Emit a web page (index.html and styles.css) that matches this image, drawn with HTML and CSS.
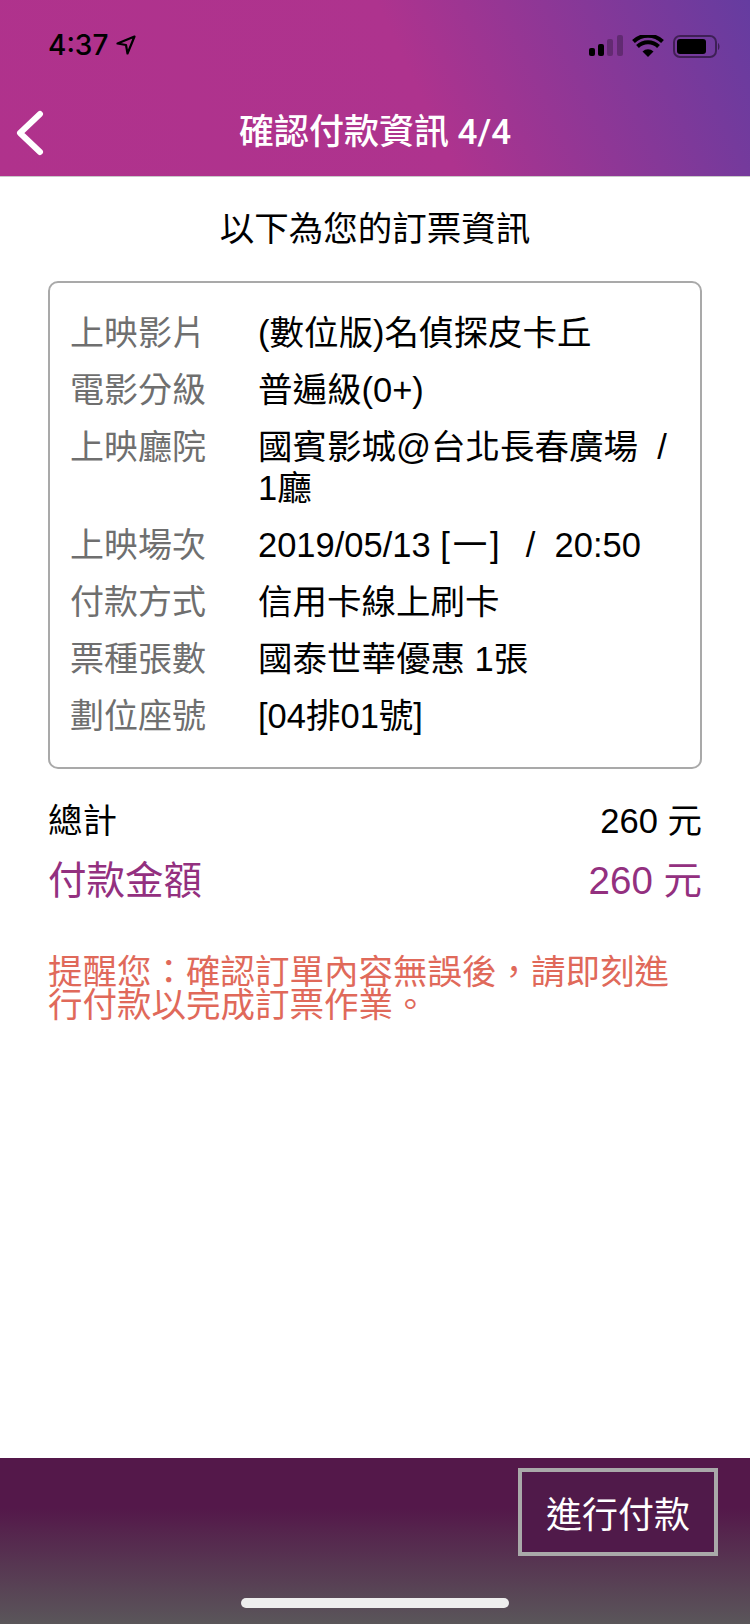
FILE: index.html
```html
<!doctype html>
<html lang="zh-Hant">
	<head>
		<meta charset="UTF-8">
		<meta name="viewport" content="width=device-width, initial-scale=1.0">
		<title>確認付款資訊</title>
		<link rel="stylesheet" href="styles.css">
	</head>
	<body>
		<header class="top">
			<div class="status">
				<div class="clock">
					<span>4:37</span>
					<svg class="arrow" width="20" height="20" viewBox="0 0 20 20"><path d="M18.5 1.5 L1.5 8.5 L10 10 L11.5 18.5 Z" fill="none" stroke="#000" stroke-width="2.2" stroke-linejoin="round"/></svg>
				</div>
				<div class="indicators">
					<svg width="34" height="21" viewBox="0 0 34 21">
						<rect x="0" y="13" width="6" height="8" rx="2"/>
						<rect x="9" y="9" width="6" height="12" rx="2"/>
						<rect x="18" y="4" width="6" height="17" rx="2" opacity="0.25"/>
						<rect x="28" y="0" width="6" height="21" rx="2" opacity="0.25"/>
					</svg>
					<svg class="wifi" width="32" height="22" viewBox="0 0 32 22">
						<path d="M16 22 L10.5 16.5 A8 8 0 0 1 21.5 16.5 Z"/>
						<path d="M5.5 11.5 A15 15 0 0 1 26.5 11.5" fill="none" stroke="#000" stroke-width="4"/>
						<path d="M1.5 6.5 A21 21 0 0 1 30.5 6.5" fill="none" stroke="#000" stroke-width="4"/>
					</svg>
					<svg class="battery" width="48" height="23" viewBox="0 0 48 23">
						<rect x="1" y="1" width="42" height="21" rx="6" fill="none" stroke="#000" stroke-width="2" opacity="0.45"/>
						<rect x="4" y="4" width="29" height="15" rx="3"/>
						<path d="M45 8 C47 9 47 14 45 15 Z" opacity="0.45"/>
					</svg>
				</div>
			</div>
			<nav class="nav">
				<svg class="back" width="30" height="46" viewBox="0 0 30 46"><path d="M25 4 L5 23 L25 42" fill="none" stroke="#fff" stroke-width="6" stroke-linecap="round" stroke-linejoin="round"/></svg>
				<h2 class="nav-title">確認付款資訊 4/4</h2>
			</nav>
		</header>

		<main class="content">
			<h1 class="lead">以下為您的訂票資訊</h1>

			<dl class="info">
				<dt>上映影片</dt><dd>(數位版)名偵探皮卡丘</dd>
				<dt>電影分級</dt><dd>普遍級(0+)</dd>
				<dt>上映廳院</dt><dd>國賓影城@台北長春廣場 &nbsp;/ 1廳</dd>
				<dt>上映場次</dt><dd>2019/05/13 [&#8202;一&#8202;]&#8201; &nbsp;/ &nbsp;20:50</dd>
				<dt>付款方式</dt><dd>信用卡線上刷卡</dd>
				<dt>票種張數</dt><dd>國泰世華優惠 1張</dd>
				<dt>劃位座號</dt><dd>[04排01號]</dd>
			</dl>

			<div class="sum">
				<span>總計</span>
				<span>260 元</span>
			</div>
			<div class="sum pay">
				<span>付款金額</span>
				<span>260 元</span>
			</div>

			<p class="notice">提醒您：確認訂單內容無誤後，請即刻進行付款以完成訂票作業。</p>
		</main>

		<footer class="bottom">
			<button type="button" class="go">進行付款</button>
			<div class="home"></div>
		</footer>
	</body>
</html>
```

FILE: styles.css
```css
* {
	box-sizing: border-box;
}

body {
	margin: 0;
	width: 750px;
	height: 1624px;
	display: flex;
	flex-direction: column;
	background-color: #fff;
	color: #000;
	font-family: "Liberation Sans", "Noto Sans CJK TC", sans-serif;
	font-size: 34.5px;
	overflow: hidden;
}

.top {
	height: 177px;
	flex: none;
	background: linear-gradient(65deg, #b0328c 0%, #ae338e 55%, #653ca0 100%);
	border-bottom: 1px solid #c9c9c9;
}

.status {
	height: 90px;
	padding: 32px 29px 0 48px;
	display: flex;
	justify-content: space-between;
	align-items: flex-start;
}

.clock {
	display: flex;
	align-items: center;
	gap: 8px;
	font-family: Inter, "Liberation Sans", sans-serif;
	font-size: 28px;
	font-weight: 500;
	line-height: 26px;
}

.indicators {
	display: flex;
	align-items: flex-start;
	gap: 9px;
	margin-top: 3px;
}

.nav {
	height: 86px;
	padding: 0 15px;
	display: flex;
	align-items: center;
	position: relative;
}

.back {
	display: block;
}

.nav-title {
	position: absolute;
	left: 0;
	right: 0;
	margin: 0;
	text-align: center;
	color: #fff;
	font-family: Roboto, "Noto Sans CJK TC", sans-serif;
	font-size: 35px;
	font-weight: 500;
	line-height: 44px;
}

.content {
	flex: 1;
	padding: 0 48px;
}

.lead {
	margin: 31px 0 0;
	text-align: center;
	font-size: 34.5px;
	font-weight: 400;
	line-height: 42px;
}

.info {
	margin: 31px 0 0;
	height: 488px;
	padding: 30px 21px 0 20px;
	border: 2px solid #a9a9a9;
	border-radius: 10px;
	display: grid;
	grid-template-columns: 188px 1fr;
	grid-auto-rows: min-content;
	row-gap: 16px;
	line-height: 41px;
}

.info dt {
	color: #6f6f6f;
	font-size: 34px;
}

.info dd {
	margin: 0;
}

.sum {
	display: flex;
	justify-content: space-between;
	margin-top: 31px;
	line-height: 42px;
}

.pay {
	margin-top: 15px;
	color: #93307f;
	font-size: 38.5px;
	line-height: 48px;
}

.notice {
	margin: 51px 0 0;
	color: #e0695a;
	line-height: 33px;
}

.bottom {
	height: 166px;
	flex: none;
	padding: 10px 32px 0 0;
	display: flex;
	justify-content: flex-end;
	align-items: flex-start;
	position: relative;
	background: linear-gradient(#54184a 0%, #54184a 30%, #5a565a 100%);
}

.go {
	width: 200px;
	height: 88px;
	border: 4px solid #a9a9a9;
	background-color: #501a4a;
	color: #fff;
	font-family: inherit;
	font-size: 36px;
	padding: 0;
}

.home {
	position: absolute;
	left: 241px;
	bottom: 16px;
	width: 268px;
	height: 10px;
	border-radius: 5px;
	background-color: #eee;
}
```
